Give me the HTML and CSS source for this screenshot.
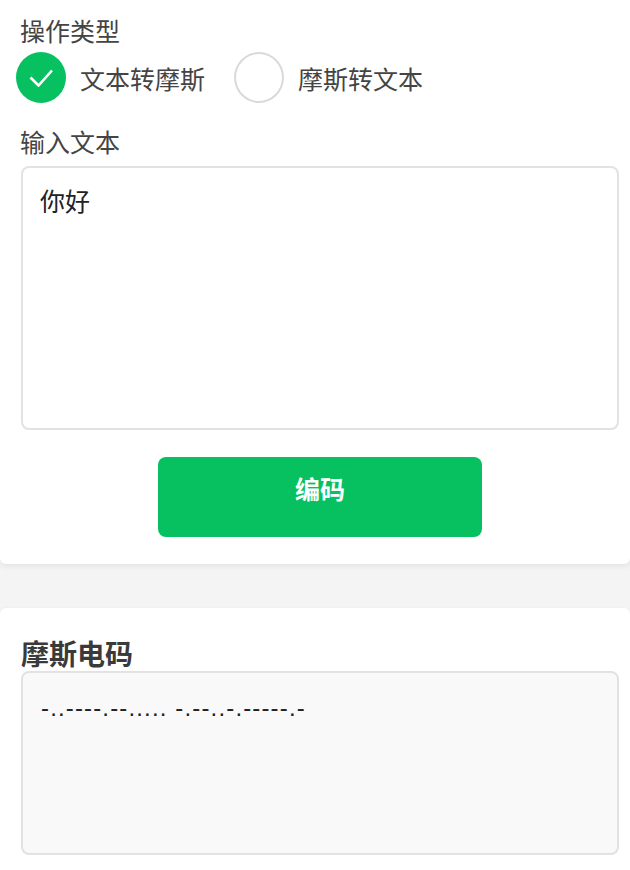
FILE: index.html
```html
<!DOCTYPE html>
<html lang="zh-CN">

<head>
  <meta charset="UTF-8">
  <meta name="viewport" content="width=device-width, initial-scale=1.0">
  <title>摩斯电码</title>
  <link rel="stylesheet" href="styles.css">
</head>

<body>
  <div class="card top">
    <p class="label">操作类型</p>
    <div class="radios">
      <div class="radio">
        <i class="dot on">
          <svg width="24" height="18" viewBox="0 0 24 18" fill="none" stroke="#fff" stroke-width="2.6">
            <path d="M1.5 8.5 9.5 16.5 23 1.5" />
          </svg>
        </i>
        <span>文本转摩斯</span>
      </div>
      <div class="radio">
        <i class="dot"></i>
        <span>摩斯转文本</span>
      </div>
    </div>
    <p class="label second">输入文本</p>
    <div class="box input">你好</div>
    <button class="btn">编码</button>
  </div>
  <div class="card bottom">
    <p class="title">摩斯电码</p>
    <div class="box output">-..----.--..... -.--..-.-----.-</div>
  </div>
</body>

</html>
```

FILE: styles.css
```css
* {
  box-sizing: border-box;
}

html,
body {
  margin: 0;
  height: 870px;
  overflow: hidden;
}

body {
  background: #f4f4f4;
  color: #444;
  font-family: "Noto Sans CJK SC", "Liberation Sans", sans-serif;
  font-size: 25px;
}

.card {
  padding: 0 11px 0 21px;
  background: #fff;
}

.top {
  height: 564px;
  padding-top: 14px;
  border-radius: 0 0 6px 6px;
  box-shadow: 0 2px 6px rgba(0, 0, 0, 0.08);
}

.bottom {
  height: 262px;
  margin-top: 44px;
  padding-top: 30px;
  border-radius: 6px 6px 0 0;
  box-shadow: 0 0 3px rgba(0, 0, 0, 0.05);
}

.label {
  margin: 0 0 0 -1px;
  height: 38px;
  line-height: 32px;
  font-size: 25px;
}

.second {
  margin-top: 20px;
  height: 43px;
  line-height: 36px;
}

.radios {
  display: flex;
  margin-left: -5px;
  gap: 29px;
}

.radio {
  display: flex;
  align-items: center;
  gap: 14px;
}

.dot {
  display: flex;
  align-items: center;
  justify-content: center;
  width: 50px;
  height: 51px;
  border: 2px solid #d9d9d9;
  border-radius: 50%;
}

.dot.on {
  border: none;
  background: #07c160;
}

.box {
  width: 598px;
  border: 2px solid #e2e2e2;
  border-radius: 8px;
}

.input {
  height: 264px;
  padding: 12px 17px;
  color: #222;
  font-size: 25px;
  line-height: 40px;
}

.btn {
  display: block;
  width: 324px;
  height: 80px;
  margin: 27px 0 0 137px;
  padding: 0 0 19px;
  border: none;
  border-radius: 8px;
  background: #07c160;
  color: #fff;
  font-family: inherit;
  font-size: 25px;
  font-weight: 700;
}

.title {
  margin: 0;
  height: 33px;
  line-height: 30px;
  font-size: 28px;
  font-weight: 700;
  color: #3a3a3a;
}

.output {
  height: 184px;
  padding: 15px 18px;
  background: #f9f9f9;
  color: #222;
  font-family: "Liberation Sans", sans-serif;
  font-size: 24px;
  letter-spacing: 1.15px;
  line-height: 40px;
}
```
